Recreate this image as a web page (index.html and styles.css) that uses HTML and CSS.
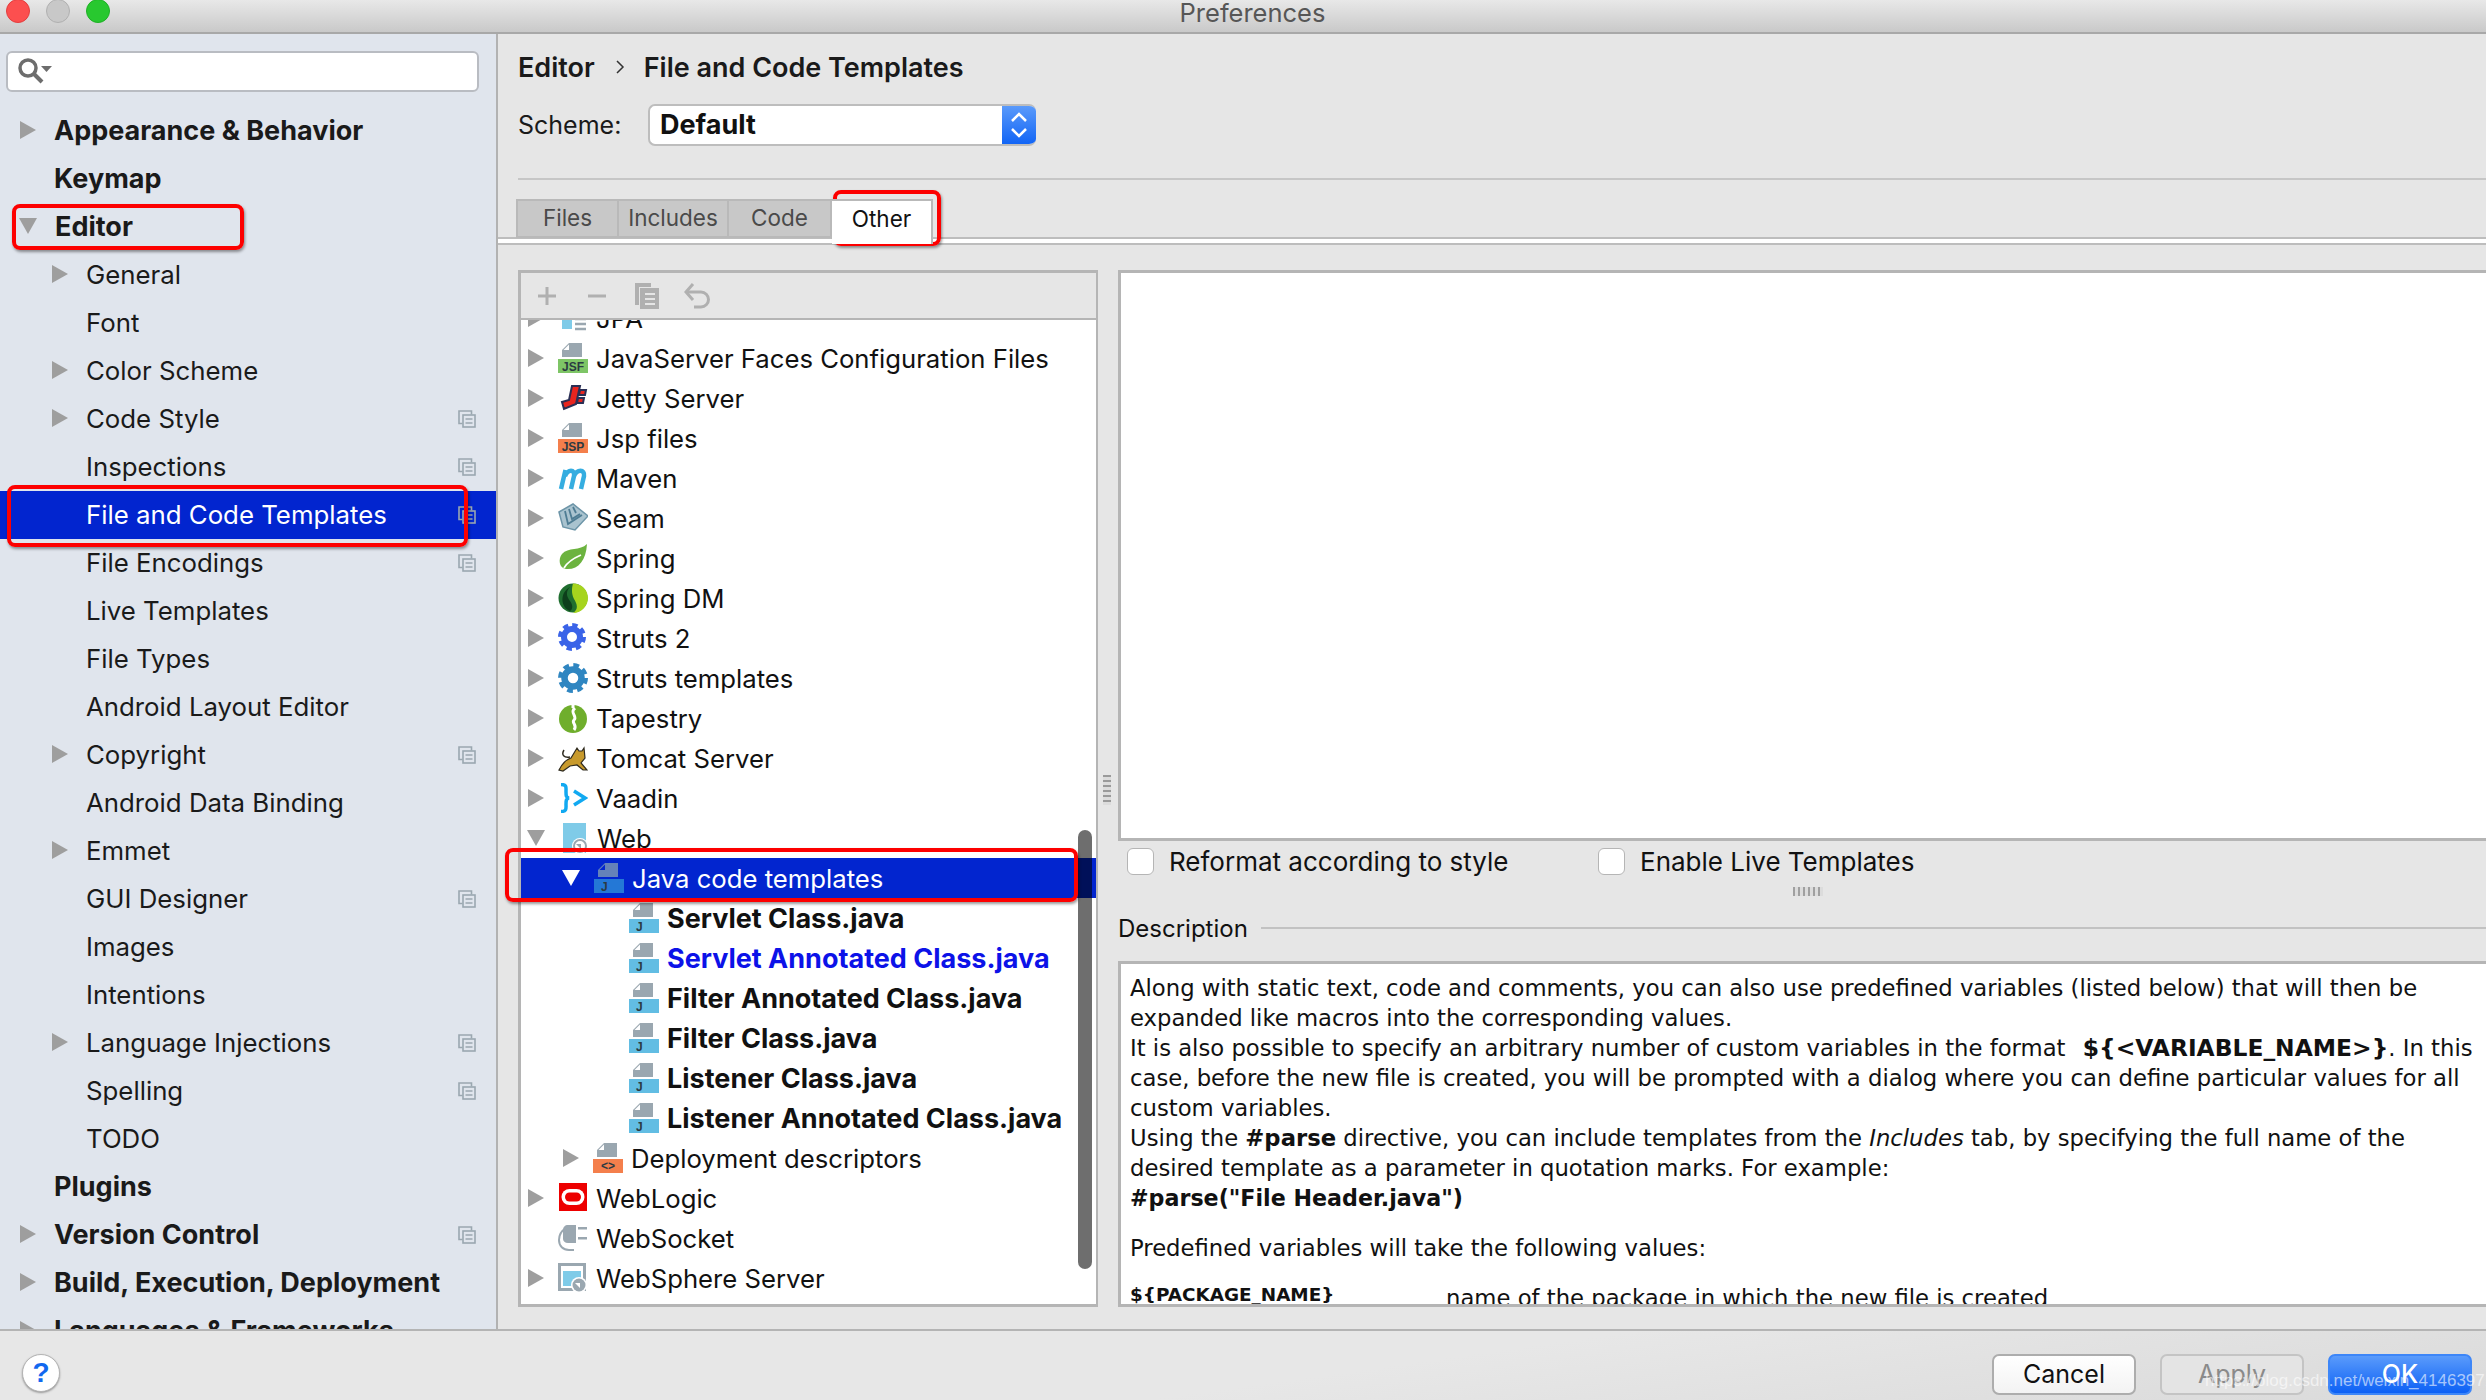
FILE: index.html
```html
<!DOCTYPE html>
<html lang="en">
<head>
<meta charset="utf-8">
<title>Preferences</title>
<link rel="stylesheet" href="styles.css">
</head>
<body>
<svg class="defs" width="0" height="0" aria-hidden="true">
  <defs>
    <symbol id="sync" viewBox="0 0 18 18"><path d="M4.5 13.5H1V1h12.500v3.500" fill="none" stroke="#9aa7b0" stroke-width="1.600"/><rect x="5" y="5" width="12" height="12" fill="none" stroke="#9aa7b0" stroke-width="1.600"/><path d="M7.500 9h7M7.500 13h7" stroke="#9aa7b0" stroke-width="1.600"/></symbol>
    <symbol id="doc" viewBox="0 0 30 30"><path d="M11 0h13v14H4V7z" fill="#9aa7b0"/><path d="M11 1.500v5.500H5.500z" fill="#fff"/></symbol>
  </defs>
</svg>
<div class="window">
  <header class="titlebar">
    <div class="lights"><span class="light red"></span><span class="light grey"></span><span class="light green"></span></div>
    <div class="title">Preferences</div>
  </header>

  <div class="content">
    <aside class="sidebar">
      <div class="search">
        <svg class="search-icon" viewBox="0 0 36 30"><circle cx="11" cy="11" r="8" fill="none" stroke="#6d6d6d" stroke-width="3.500"/><path d="M17 17 25 25" stroke="#6d6d6d" stroke-width="4"/><path d="M24 9h11l-5.500 6z" fill="#6d6d6d"/></svg>
      </div>
      <ul class="nav">
        <li class="nav-row top"><i class="tri"></i><span>Appearance &amp; Behavior</span></li>
        <li class="nav-row top"><i class="tri none"></i><span>Keymap</span></li>
        <li class="nav-row top"><i class="tri down"></i><span>Editor</span></li>
        <li class="nav-row sub"><i class="tri"></i><span>General</span></li>
        <li class="nav-row sub"><i class="tri none"></i><span>Font</span></li>
        <li class="nav-row sub"><i class="tri"></i><span>Color Scheme</span></li>
        <li class="nav-row sub"><i class="tri"></i><span>Code Style</span><svg class="sync"><use href="#sync"/></svg></li>
        <li class="nav-row sub"><i class="tri none"></i><span>Inspections</span><svg class="sync"><use href="#sync"/></svg></li>
        <li class="nav-row sub selected"><i class="tri none"></i><span>File and Code Templates</span><svg class="sync"><use href="#sync"/></svg></li>
        <li class="nav-row sub"><i class="tri none"></i><span>File Encodings</span><svg class="sync"><use href="#sync"/></svg></li>
        <li class="nav-row sub"><i class="tri none"></i><span>Live Templates</span></li>
        <li class="nav-row sub"><i class="tri none"></i><span>File Types</span></li>
        <li class="nav-row sub"><i class="tri none"></i><span>Android Layout Editor</span></li>
        <li class="nav-row sub"><i class="tri"></i><span>Copyright</span><svg class="sync"><use href="#sync"/></svg></li>
        <li class="nav-row sub"><i class="tri none"></i><span>Android Data Binding</span></li>
        <li class="nav-row sub"><i class="tri"></i><span>Emmet</span></li>
        <li class="nav-row sub"><i class="tri none"></i><span>GUI Designer</span><svg class="sync"><use href="#sync"/></svg></li>
        <li class="nav-row sub"><i class="tri none"></i><span>Images</span></li>
        <li class="nav-row sub"><i class="tri none"></i><span>Intentions</span></li>
        <li class="nav-row sub"><i class="tri"></i><span>Language Injections</span><svg class="sync"><use href="#sync"/></svg></li>
        <li class="nav-row sub"><i class="tri none"></i><span>Spelling</span><svg class="sync"><use href="#sync"/></svg></li>
        <li class="nav-row sub"><i class="tri none"></i><span>TODO</span></li>
        <li class="nav-row top"><i class="tri none"></i><span>Plugins</span></li>
        <li class="nav-row top"><i class="tri"></i><span>Version Control</span><svg class="sync"><use href="#sync"/></svg></li>
        <li class="nav-row top"><i class="tri"></i><span>Build, Execution, Deployment</span></li>
        <li class="nav-row top"><i class="tri"></i><span>Languages &amp; Frameworks</span></li>
      </ul>
    </aside>

    <main class="main">
      <div class="crumbs"><span>Editor</span><svg class="crumb-sep" viewBox="0 0 10 16"><path d="M2 2l6 6-6 6" fill="none" stroke="#333" stroke-width="1.500"/></svg><span>File and Code Templates</span></div>
      <div class="scheme">
        <span class="scheme-label">Scheme:</span>
        <div class="select"><span class="select-value">Default</span>
          <span class="select-btn"><svg viewBox="0 0 34 42" width="34" height="42"><path d="M10 17l7-7 7 7M10 25l7 7 7-7" fill="none" stroke="#fff" stroke-width="2.500"/></svg></span>
        </div>
      </div>
      <div class="rule"></div>
      <div class="tabs">
        <span class="tab t1">Files</span><span class="tab t2">Includes</span><span class="tab t3">Code</span><span class="tab t4 active">Other</span>
      </div>
      <div class="tab-strip"></div>

      <div class="panels">
        <section class="tree-panel">
          <div class="toolbar">
            <svg class="tool" viewBox="0 0 30 30"><path d="M15 6v18M6 15h18" stroke="#b0b0b0" stroke-width="3"/></svg>
            <svg class="tool" viewBox="0 0 30 30"><path d="M6 15h18" stroke="#b0b0b0" stroke-width="3"/></svg>
            <svg class="tool" viewBox="0 0 30 30"><path d="M3 2h16v4H7v18H3z" fill="#b0b0b0"/><path d="M8 7h19v21H8z" fill="#b0b0b0"/><path d="M13 13h10M13 18h10M13 23h10" stroke="#e6e6e6" stroke-width="2"/></svg>
            <svg class="tool" viewBox="0 0 30 30"><path d="M5 11h14a7 7 0 0 1 0 15h-7" fill="none" stroke="#b0b0b0" stroke-width="3"/><path d="M11 3 4 11l7 8" fill="none" stroke="#b0b0b0" stroke-width="3"/></svg>
          </div>
          <div class="tree-view">
            <ul class="tree">
              <li class="row"><i class="tri"></i><svg class="ico" viewBox="0 0 30 30"><rect x="4" y="16" width="10" height="10" fill="#7fcbe8"/><path d="M17 16h11M17 21h11M17 26h11" stroke="#9aa7b0" stroke-width="2.500"/></svg><span>JPA</span></li>
              <li class="row"><i class="tri"></i><svg class="ico" viewBox="0 0 30 30"><use href="#doc"/><rect y="16" width="30" height="14" fill="#7ec566"/><text class="ico-text" x="15" y="28" text-anchor="middle" font-size="12">JSF</text></svg><span>JavaServer Faces Configuration Files</span></li>
              <li class="row"><i class="tri"></i><svg class="ico" viewBox="0 0 30 30"><path d="M14 3h8l-4 18-12 5-2-7 7-2zM22 7h6l-1 5h-6zM20 15h6l-1 5h-6z" fill="#e8251f" stroke="#2a2f55" stroke-width="2"/></svg><span>Jetty Server</span></li>
              <li class="row"><i class="tri"></i><svg class="ico" viewBox="0 0 30 30"><use href="#doc"/><rect y="16" width="30" height="14" fill="#f47f4c"/><text class="ico-text" x="15" y="28" text-anchor="middle" font-size="12">JSP</text></svg><span>Jsp files</span></li>
              <li class="row"><i class="tri"></i><svg class="ico" viewBox="0 0 30 30"><path d="M3 26 7.500 7M7 13c3-7 10-7 9 0L13 26M16 13c3-7 11-7 10 0L23 26" fill="none" stroke="#35ade0" stroke-width="4.500"/></svg><span>Maven</span></li>
              <li class="row"><i class="tri"></i><svg class="ico" viewBox="0 0 30 30"><path d="M1 9 15 1l15 12-13 14L5 24z" fill="#a9c3cf" stroke="#6d95a8" stroke-width="1.500"/><path d="M7 8l3 13 14-9M11 6l3 10 8-5M15 4l3 6" fill="none" stroke="#4e7c93" stroke-width="1.800"/></svg><span>Seam</span></li>
              <li class="row"><i class="tri"></i><svg class="ico" viewBox="0 0 30 30"><path d="M29 1C28 18 20 27 8 26 1 25 0 16 4 11 10 4 22 8 29 1z" fill="#6cb33f"/><path d="M6 25C10 18 16 15 23 12" fill="none" stroke="#fff" stroke-width="1.800"/></svg><span>Spring</span></li>
              <li class="row"><i class="tri"></i><svg class="ico" viewBox="0 0 30 30"><circle cx="15" cy="15" r="14.500" fill="#1f6e2f"/><path d="M15 .5c9 0 15 7 15 14.500s-6 15-15 15c6-4 4-9 1-14-3-6-2-12-1-15.500z" fill="#a6d41e"/><path d="M12 4C7 9 9 14 12 18s3 8 0 10C3 25 1 10 12 4z" fill="#0d3f1b"/></svg><span>Spring DM</span></li>
              <li class="row"><i class="tri"></i><svg class="ico" viewBox="0 0 30 30"><circle cx="14" cy="14" r="8" fill="none" stroke="#3a63e8" stroke-width="6"/><circle cx="14" cy="14" r="12" fill="none" stroke="#3a63e8" stroke-width="4" stroke-dasharray="5.400 4"/></svg><span>Struts 2</span></li>
              <li class="row"><i class="tri"></i><svg class="ico" viewBox="0 0 30 30"><circle cx="15" cy="15" r="8.500" fill="none" stroke="#2f86c1" stroke-width="6.500"/><circle cx="15" cy="15" r="13" fill="none" stroke="#2f86c1" stroke-width="4" stroke-dasharray="5.800 4.400"/></svg><span>Struts templates</span></li>
              <li class="row"><i class="tri"></i><svg class="ico" viewBox="0 0 30 30"><circle cx="15" cy="16" r="14" fill="#6fae2c"/><path d="M15 0v5M17 5c-6 5 3 8-1 12-3 3 4 5 0 10" fill="none" stroke="#fff" stroke-width="3"/></svg><span>Tapestry</span></li>
              <li class="row"><i class="tri"></i><svg class="ico" viewBox="0 0 30 30"><path d="M1 27c3-6 6-10 12-12l6-10 2 3h3l2-3 1 10-4 5 6 7h-4l-6-5-7 1-7 5z" fill="#c89a2c" stroke="#2e2a1e" stroke-width="1.200"/><path d="M12 14C6 15 3 12 6 7" fill="none" stroke="#2e2a1e" stroke-width="1.500"/></svg><span>Tomcat Server</span></li>
              <li class="row"><i class="tri"></i><svg class="ico" viewBox="0 0 30 30"><path d="M3 1.500c6 0 5 3 5 7s0 6 3 6.500c-3 .5-3 3-3 6.500s1 7-5 7" fill="none" stroke="#11a9f1" stroke-width="3.500"/><path d="M16 8l11 7-11 7" fill="none" stroke="#11a9f1" stroke-width="3.500"/></svg><span>Vaadin</span></li>
              <li class="row"><i class="tri down"></i><svg class="ico" viewBox="0 0 30 30"><path d="M4 0h23v18H4z" fill="#7fcbe8"/><rect x="4" y="18" width="23" height="12" fill="#7fcbe8"/><circle cx="21" cy="23" r="8" fill="#fff"/><circle cx="21" cy="23" r="6" fill="none" stroke="#9aa7b0" stroke-width="2"/><path d="M17 21h5v5z" fill="#9aa7b0"/></svg><span>Web</span></li>
              <li class="row depth1 selected"><i class="tri down"></i><svg class="ico" viewBox="0 0 30 30"><path d="M11 0h13v14H4V7z" fill="#6582b9"/><path d="M11 1.500v5.500H5.500z" fill="#0225cf"/><rect y="16" width="30" height="14" fill="#2478d6"/><text class="ico-text" x="7" y="28" font-size="12">J</text></svg><span>Java code templates</span></li>
              <li class="row depth2 tpl"><svg class="ico" viewBox="0 0 30 30"><use href="#doc"/><rect y="16" width="30" height="14" fill="#62bde3"/><text class="ico-text" x="7" y="28" font-size="12">J</text></svg><span>Servlet Class.java</span></li>
              <li class="row depth2 tpl link"><svg class="ico" viewBox="0 0 30 30"><use href="#doc"/><rect y="16" width="30" height="14" fill="#62bde3"/><text class="ico-text" x="7" y="28" font-size="12">J</text></svg><span>Servlet Annotated Class.java</span></li>
              <li class="row depth2 tpl"><svg class="ico" viewBox="0 0 30 30"><use href="#doc"/><rect y="16" width="30" height="14" fill="#62bde3"/><text class="ico-text" x="7" y="28" font-size="12">J</text></svg><span>Filter Annotated Class.java</span></li>
              <li class="row depth2 tpl"><svg class="ico" viewBox="0 0 30 30"><use href="#doc"/><rect y="16" width="30" height="14" fill="#62bde3"/><text class="ico-text" x="7" y="28" font-size="12">J</text></svg><span>Filter Class.java</span></li>
              <li class="row depth2 tpl"><svg class="ico" viewBox="0 0 30 30"><use href="#doc"/><rect y="16" width="30" height="14" fill="#62bde3"/><text class="ico-text" x="7" y="28" font-size="12">J</text></svg><span>Listener Class.java</span></li>
              <li class="row depth2 tpl"><svg class="ico" viewBox="0 0 30 30"><use href="#doc"/><rect y="16" width="30" height="14" fill="#62bde3"/><text class="ico-text" x="7" y="28" font-size="12">J</text></svg><span>Listener Annotated Class.java</span></li>
              <li class="row depth1"><i class="tri"></i><svg class="ico" viewBox="0 0 30 30"><use href="#doc"/><rect y="16" width="30" height="14" fill="#f47f4c"/><text class="ico-text" x="15" y="27" text-anchor="middle" font-size="12">&lt;&gt;</text></svg><span>Deployment descriptors</span></li>
              <li class="row"><i class="tri"></i><svg class="ico" viewBox="0 0 30 30"><rect x="1" width="28" height="28" fill="#ed0000"/><rect x="3.500" y="6" width="23" height="16" rx="8" fill="#fff"/><rect x="7" y="9.500" width="16" height="9" rx="4.500" fill="#ed0000"/></svg><span>WebLogic</span></li>
              <li class="row"><i class="tri none"></i><svg class="ico" viewBox="0 0 30 30"><path d="M10 2h8v18h-8c-3 0-5-2-5-4V7c0-3 2-5 5-5z" fill="#9aa7b0"/><path d="M20 4h9v2.500h-9zM20 14h9v2.500h-9z" fill="#9aa7b0"/><path d="M8 5C3 8 1 12 1 17c0 6 4 10 10 10h5" fill="none" stroke="#9aa7b0" stroke-width="2"/></svg><span>WebSocket</span></li>
              <li class="row"><i class="tri"></i><svg class="ico" viewBox="0 0 30 30"><rect x="1.500" y="1.500" width="25" height="25" fill="#fff" stroke="#9aa7b0" stroke-width="3"/><rect x="5" y="8" width="18" height="15" fill="#7fcbe8"/><circle cx="21" cy="22" r="8" fill="#fff"/><circle cx="21" cy="22" r="6.500" fill="#9aa7b0"/><path d="M17 20h5v5z" fill="#fff"/></svg><span>WebSphere Server</span></li>
              <li class="row"><i class="tri none"></i><svg class="ico" viewBox="0 0 30 30"><path d="M8 6h6V2h6v8H8z" fill="#3a4fb8"/></svg><span></span></li>
            </ul>
            <div class="scrollbar"></div>
          </div>
        </section>

        <div class="split-v"><span class="grip-v"></span></div>

        <section class="detail">
          <div class="editor"></div>
          <div class="options">
            <label class="check c1"><i class="box"></i><span>Reformat according to style</span></label>
            <label class="check"><i class="box"></i><span>Enable Live Templates</span></label>
          </div>
          <div class="grip-h"></div>
          <div class="desc-head"><span>Description</span><i class="desc-line"></i></div>
          <div class="desc">
            <p>Along with static text, code and comments, you can also use predefined variables (listed below) that will then be<br>expanded like macros into the corresponding values.<br>It is also possible to specify an arbitrary number of custom variables in the format <b class="v-name">${&lt;VARIABLE_NAME&gt;}</b>. In this<br>case, before the new file is created, you will be prompted with a dialog where you can define particular values for all<br>custom variables.<br>Using the <b>#parse</b> directive, you can include templates from the <em>Includes</em> tab, by specifying the full name of the<br>desired template as a parameter in quotation marks. For example:<br><b class="parse-ex">#parse("File Header.java")</b></p>
            <p class="pre">Predefined variables will take the following values:</p>
            <div class="var"><b class="var-name">${PACKAGE_NAME}</b><span>name of the package in which the new file is created</span></div>
          </div>
        </section>
      </div>
    </main>
  </div>

  <footer class="footer">
    <button class="help">?</button>
    <div class="buttons">
      <button class="btn">Cancel</button>
      <button class="btn disabled">Apply</button>
      <button class="btn primary">OK</button>
    </div>
  </footer>

  <div class="mark mark-editor"></div>
  <div class="mark mark-selected"></div>
  <div class="mark mark-other"></div>
  <div class="mark mark-java"></div>
  <div class="watermark">https://blog.csdn.net/weixin_41463971</div>
</div>
</body>
</html>
```
FILE: styles.css
```css
* { box-sizing: border-box; }
html, body { margin: 0; padding: 0; }
body { width: 2486px; height: 1400px; overflow: hidden; font-family: Inter, "Liberation Sans", sans-serif; color: #1a1a1a; background: #e6e6e6; }
ul { list-style: none; margin: 0; padding: 0; }
p { margin: 0; }
.defs { position: absolute; }

.window { position: relative; display: flex; flex-direction: column; width: 2486px; height: 1400px; }

/* Title bar */
.titlebar { display: flex; flex: none; height: 34px; background: linear-gradient(#e8e8e8, #c9c9c9); border-bottom: 2px solid #a8a8a8; overflow: hidden; position: relative; }
.lights { display: flex; gap: 16px; padding-left: 6px; margin-top: -1px; }
.light { width: 24px; height: 24px; border-radius: 50%; }
.red { background: #fc4f4f; border: 1px solid #e33e3e; }
.grey { background: #c8c8c8; border: 1px solid #b0b0b0; }
.green { background: #28c82f; border: 1px solid #1fb026; }
.title { position: absolute; left: 19px; right: 0; top: -3px; text-align: center; font-size: 25.500px; line-height: 32px; color: #565656; }

.content { display: flex; flex: none; height: 1295px; }

/* Sidebar */
.sidebar { flex: none; width: 498px; height: 100%; background: #e0e5ed; border-right: 2px solid #b2b2b2; padding-top: 17px; overflow: hidden; }
.search { width: 473px; height: 41px; margin-left: 6px; background: #fff; border: 2px solid #b9bcc2; border-radius: 6px; display: flex; align-items: center; padding-left: 9px; }
.search-icon { width: 36px; height: 30px; }
.nav { margin-top: 15px; }
.nav-row { display: flex; align-items: center; height: 48px; padding-bottom: 2px; font-size: 25.800px; position: relative; white-space: nowrap; }
.nav-row.top { font-size: 27px; font-weight: 700; padding-left: 20px; }
.nav-row.sub { padding-left: 52px; }
.nav-row .tri { margin-right: 18px; }
.nav-row.selected { background: #0225cf; color: #fff; }
.sync { position: absolute; left: 458px; top: 15px; width: 18px; height: 18px; }

.tri { flex: none; display: block; width: 16px; height: 18px; background: #9e9e9e; clip-path: polygon(0 0, 100% 50%, 0 100%); }
.tri.down { width: 18px; height: 16px; margin-left: -1px; clip-path: polygon(0 0, 100% 0, 50% 100%); }
.tri.none { visibility: hidden; }

/* Main */
.main { flex: 1; min-width: 0; display: flex; flex-direction: column; }
.crumbs { display: flex; align-items: center; height: 38px; margin: 14px 0 0 20px; font-size: 27px; font-weight: 600; white-space: nowrap; }
.crumb-sep { width: 10px; height: 16px; margin: 0 19px 0 20px; }
.scheme { display: flex; align-items: center; height: 42px; margin: 18px 0 0 20px; font-size: 27px; }
.scheme-label { width: 130px; font-size: 25px; }
.select { display: flex; justify-content: space-between; width: 388px; height: 42px; background: #fff; border: 2px solid #bdbdbd; border-right: 0; border-radius: 7px; overflow: hidden; }
.select-value { font-weight: 700; padding-left: 10px; line-height: 37px; color: #111; }
.select-btn { width: 34px; height: 42px; margin-top: -2px; background: linear-gradient(#5e9dfb, #0e62f5); display: block; }
.rule { height: 2px; margin: 32px 0 0 20px; background: #c6c6c6; }
.tabs { display: flex; height: 39px; margin: 19px 0 0 18px; font-size: 22.500px; position: relative; z-index: 1; }
.tab { display: flex; align-items: center; justify-content: center; background: #c8c8c8; color: #4a4a4a; border: 2px solid #b9b9b9; border-width: 2px 2px 2px 0; padding-bottom: 2px; }
.t1 { width: 103px; border-left-width: 2px; }
.t2 { width: 110px; }
.t3 { width: 103px; }
.t4 { width: 101px; }
.tab.active { background: #fff; color: #111; border-bottom: 0; height: 45px; padding-bottom: 8px; }
.tab-strip { height: 8px; margin-top: -1px; background: #fff; border-top: 2px solid #bdbdbd; border-bottom: 2px solid #bdbdbd; }

.panels { display: flex; height: 1037px; margin: 25px 0 0 20px; }

/* Tree */
.tree-panel { flex: none; width: 580px; height: 100%; display: flex; flex-direction: column; border: 3px solid #b5b5b5; border-right-width: 2px; background: #fff; }
.toolbar { flex: none; height: 47px; background: #e6e6e6; border-bottom: 2px solid #b5b5b5; display: flex; align-items: center; gap: 20px; padding: 1px 0 0 11px; }
.tool { width: 30px; height: 30px; display: block; }
.tree-view { position: relative; flex: 1; overflow: hidden; }
.tree { margin-top: -22px; }
.row { display: flex; align-items: center; height: 40px; padding-left: 7px; font-size: 25.700px; white-space: nowrap; color: #111; }
.row .tri { margin-right: 14px; }
.row .ico { flex: none; width: 30px; height: 30px; margin-right: 8px; }
.depth1 { padding-left: 42px; }
.depth2 { padding-left: 108px; }
.row.selected { background: #0225cf; color: #fff; }
.row.selected .tri { background: #fff; }
.tpl { font-size: 27px; font-weight: 700; }
.link { color: #0c12e8; }
.ico-text { font-family: "Liberation Sans", sans-serif; font-weight: 700; fill: #2b3a42; }
.scrollbar { position: absolute; left: 557px; top: 510px; width: 14px; height: 439px; border-radius: 7px; background: rgba(0, 0, 0, .57); }

.split-v { flex: none; width: 20px; position: relative; }
.grip-v { position: absolute; left: 5px; top: 505px; width: 8px; height: 30px; background: repeating-linear-gradient(#9a9a9a 0 2px, #dcdcdc 2px 5px); }

/* Detail */
.detail { flex: 1; min-width: 0; display: flex; flex-direction: column; }
.editor { flex: none; height: 571px; background: #fff; border: 3px solid #b5b5b5; border-right: 0; }
.options { display: flex; flex: none; height: 27px; margin-top: 7px; padding-left: 9px; font-size: 26px; }
.check { display: flex; align-items: center; white-space: nowrap; color: #111; }
.c1 { width: 471px; }
.box { flex: none; width: 27px; height: 27px; margin-right: 15px; background: #fff; border: 1.500px solid #b5b5b5; border-radius: 6px; }
.grip-h { flex: none; width: 30px; height: 9px; margin: 12px 0 0 675px; background: repeating-linear-gradient(90deg, #a0a0a0 0 2px, #dcdcdc 2px 5px); }
.desc-head { flex: none; display: flex; align-items: center; height: 30px; margin-top: 17px; font-size: 24px; color: #111; }
.desc-line { flex: 1; height: 2px; margin-left: 13px; background: #c2c2c2; }
.desc { flex: none; height: 346px; margin-top: 18px; background: #fff; border: 3px solid #b5b5b5; border-right: 0; padding: 9px 0 0 9px; overflow: hidden; font-family: "DejaVu Sans", Verdana, sans-serif; font-size: 22.720px; line-height: 30px; color: #111; white-space: nowrap; }
.v-name { margin-left: 10px; font-size: 23.400px; }
.parse-ex { font-size: 22.200px; }
.pre { margin-top: 20px; }
.var { display: flex; margin-top: 20px; }
.var-name { width: 316px; margin-top: -2px; font-size: 18.400px; line-height: 28px; }

/* Footer */
.footer { flex: 1; display: flex; justify-content: space-between; border-top: 2px solid #b4b4b4; background: linear-gradient(172deg, #e7e7e7 55%, #dadada 100%); padding: 23px 14px 0 22px; }
.help { width: 38px; height: 38px; margin-top: 0; padding: 0; border-radius: 50%; background: #fff; border: 1px solid #b4b4b4; box-shadow: 0 1px 2px rgba(0,0,0,.35); color: #1168ef; font: 700 28px/36px "Liberation Sans", sans-serif; }
.buttons { display: flex; gap: 24px; }
.btn { width: 144px; height: 41px; padding: 0 0 2px; border: 2px solid #adadad; border-radius: 7px; background: linear-gradient(#ffffff, #f3f3f3); color: #111; font: 400 25px/36px Inter, "Liberation Sans", sans-serif; }
.btn.disabled { background: #e4e4e4; border-color: #c4c4c4; color: #8a8a8a; }
.btn.primary { background: linear-gradient(#5a9bfb, #0c60f5); border-color: #3d86f8; color: #fff; font-weight: 500; }

/* Annotation overlays */
.mark { position: absolute; border: 4px solid #fd0000; border-radius: 8px; box-shadow: 1px 2px 3px rgba(0,0,0,.4); pointer-events: none; }
.mark-editor { left: 12px; top: 204px; width: 232px; height: 46px; }
.mark-selected { left: 7px; top: 485px; width: 461px; height: 62px; }
.mark-other { left: 833px; top: 190px; width: 108px; height: 56px; }
.mark-java { left: 505px; top: 848px; width: 573px; height: 54px; }
.watermark { position: absolute; left: 2205px; top: 1370px; font: 17px/22px "Liberation Sans", sans-serif; color: rgba(255,255,255,.6); white-space: nowrap; }
```
